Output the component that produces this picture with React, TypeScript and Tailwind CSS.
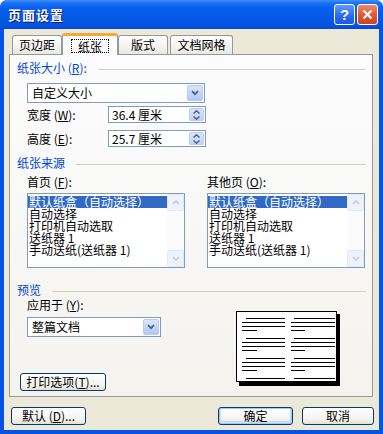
import React from "react";

const paperSources = ["默认纸盒（自动选择）", "自动选择", "打印机自动选取", "送纸器 1", "手动送纸(送纸器 1)"];

function U({ c }: { c: string }) {
  return <span className="underline underline-offset-[1px]">{c}</span>;
}

function Chevron() {
  return (
    <svg width="8" height="6" viewBox="0 0 8 6">
      <path d="M1 1.2 L4 4.2 L7 1.2" fill="none" stroke="#4d6185" strokeWidth="1.8" />
    </svg>
  );
}

function SectionTitle({ title, className = "" }: { title: React.ReactNode; className?: string }) {
  return (
    <div className={`flex items-center h-[14px] ${className}`}>
      <span className="text-[#0046d5] leading-[14px] whitespace-nowrap">{title}</span>
      <div className="flex-1 h-px bg-[#d3d0c2] ml-[11px] mt-[2px]" />
    </div>
  );
}

function Combo({ value, className = "" }: { value: string; className?: string }) {
  return (
    <div className={`flex items-center h-[20px] border border-[#7f9db9] bg-white ${className}`}>
      <span className="flex-1 pl-[4px] leading-[18px] whitespace-nowrap">{value}</span>
      <div className="w-[16px] h-[16px] m-px flex items-center justify-center rounded-[2px] border border-[#b8cbf6] bg-[linear-gradient(to_bottom,#dbe6fd,#c0d2fa_60%,#b4c8f6)]">
        <Chevron />
      </div>
    </div>
  );
}

function Spin({ value }: { value: string }) {
  return (
    <div className="flex h-[17px] w-[98px] border border-[#7f9db9] bg-white">
      <span className="flex-1 pl-[3px] leading-[15px] whitespace-nowrap">{value}</span>
      <div className="w-[15px] m-px flex flex-col items-center justify-center gap-[2px] rounded-[2px] border border-[#b8cbf6] bg-[linear-gradient(to_bottom,#dbe6fd,#c0d2fa)]">
        <svg width="7" height="4" viewBox="0 0 7 4">
          <path d="M0.5 3.5 L3.5 0.8 L6.5 3.5" fill="none" stroke="#4d6185" strokeWidth="1.5" />
        </svg>
        <svg width="7" height="4" viewBox="0 0 7 4">
          <path d="M0.5 0.5 L3.5 3.2 L6.5 0.5" fill="none" stroke="#4d6185" strokeWidth="1.5" />
        </svg>
      </div>
    </div>
  );
}

function ScrollButton({ up }: { up?: boolean }) {
  return (
    <div className="w-[17px] h-[17px] flex items-center justify-center rounded-[2px] border border-[#e3e8f6] bg-[#eef2fc]">
      <svg width="8" height="5" viewBox="0 0 8 5">
        <path d={up ? "M1 4 L4 1 L7 4" : "M1 1 L4 4 L7 1"} fill="none" stroke="#c3cbe0" strokeWidth="1.6" />
      </svg>
    </div>
  );
}

function ListBox() {
  return (
    <div className="flex w-[158px] h-[75px] border border-[#7f9db9] bg-white">
      <div className="flex-1 pt-[2px]">
        {paperSources.map((t, i) => (
          <div
            key={t}
            className={`h-[12px] leading-[12px] pl-[1px] whitespace-nowrap ${i === 0 ? "bg-[#316ac5] text-white" : ""}`}
          >
            {t}
          </div>
        ))}
      </div>
      <div className="w-[17px] flex flex-col justify-between bg-[#fbfbfd]">
        <ScrollButton up />
        <ScrollButton />
      </div>
    </div>
  );
}

function XpButton({ children, className = "", primary }: { children: React.ReactNode; className?: string; primary?: boolean }) {
  return (
    <div
      className={`h-[18px] flex items-center justify-center rounded-[3px] border border-[#003c74] bg-[linear-gradient(to_bottom,#ffffff,#f4f3ee_70%,#e3e0d4)] leading-[16px] whitespace-nowrap ${
        primary ? "shadow-[inset_0_0_0_1px_#a9c6f5,inset_0_-1px_0_2px_#c9dcfa]" : ""
      } ${className}`}
    >
      {children}
    </div>
  );
}

function PagePreview() {
  const groups = [7, 27, 47];
  const lines: React.ReactNode[] = [];
  groups.forEach((y) => {
    lines.push(<rect key={`a${y}`} x="10" y={y} width="39" height="1" />);
    lines.push(<rect key={`b${y}`} x="6" y={y + 4} width="43" height="1" />);
    lines.push(<rect key={`c${y}`} x="6" y={y + 8} width="43" height="1" />);
    lines.push(<rect key={`d${y}`} x="6" y={y + 12} width="15" height="1" />);
    lines.push(<rect key={`e${y}`} x="58" y={y} width="41" height="1" />);
    lines.push(<rect key={`f${y}`} x="55" y={y + 4} width="44" height="1" />);
    lines.push(<rect key={`g${y}`} x="55" y={y + 8} width="44" height="1" />);
    lines.push(<rect key={`h${y}`} x="55" y={y + 12} width="14" height="1" />);
  });
  lines.push(<rect key="z1" x="10" y="67" width="39" height="1" />);
  lines.push(<rect key="z2" x="58" y="67" width="41" height="1" />);
  return (
    <svg width="104" height="75" viewBox="0 0 104 75" className="mt-[14px] shrink-0">
      <rect x="3" y="3" width="101" height="72" fill="#000" />
      <rect x="0.5" y="0.5" width="100" height="70" fill="#fff" stroke="#000" />
      <g fill="#000">{lines}</g>
    </svg>
  );
}

function TitleBar() {
  return (
    <div className="h-[29px] flex items-center justify-between pl-[8px] pr-[5px] rounded-t-[7px] bg-[linear-gradient(to_bottom,#3d8ff9_0px,#1c70f5_3px,#0a60ee_8px,#0558e6_18px,#0553e0_26px,#0448d4_29px)]">
      <span className="text-white font-bold text-[13px] tracking-[1px] [text-shadow:1px_1px_#0a1883]">页面设置</span>
      <div className="flex gap-[2px]">
        <div className="w-[21px] h-[21px] rounded-[3px] border border-white flex items-center justify-center bg-[linear-gradient(to_bottom,#5c9bfb,#2a67ee_60%,#1e58e0)] text-white font-bold text-[15px] leading-none font-['Liberation_Sans',sans-serif]">
          ?
        </div>
        <div className="w-[21px] h-[21px] rounded-[3px] border border-white flex items-center justify-center bg-[linear-gradient(to_bottom,#ee8a6c,#e25a34_50%,#cc4320)]">
          <svg width="11" height="11" viewBox="0 0 11 11">
            <path d="M1.5 1.5 L9.5 9.5 M9.5 1.5 L1.5 9.5" stroke="#fff" strokeWidth="2.2" />
          </svg>
        </div>
      </div>
    </div>
  );
}

function Tab({ label, selected, className = "" }: { label: string; selected?: boolean; className?: string }) {
  if (selected) {
    return (
      <div
        className={`relative z-10 -mb-px h-[22px] flex items-center justify-center border-x border-[#919b9c] border-t-[3px] border-t-[#f5a73a] rounded-t-[3px] bg-[#fcfcfe] ${className}`}
      >
        <span className="px-[6px] h-[14px] leading-[13px] border border-dotted border-black">{label}</span>
      </div>
    );
  }
  return (
    <div
      className={`h-[19px] flex items-center justify-center border border-b-0 border-[#919b9c] rounded-t-[3px] bg-[linear-gradient(to_bottom,#ffffff,#f3f2ee_60%,#e9e7e0)] leading-[18px] ${className}`}
    >
      {label}
    </div>
  );
}

export default function App() {
  return (
    <div className="w-[383px] h-[434px] flex flex-col rounded-t-[8px] bg-[#0553e3] text-[12px] text-black leading-none font-['Noto_Sans_CJK_SC',sans-serif]">
      <TitleBar />
      <div className="flex-1 mx-[4px] mb-[4px] bg-[#ece9d8] flex flex-col">
        {/* tabs */}
        <div className="flex items-end h-[25px] pt-[4px] pl-[8px]">
          <Tab label="页边距" className="w-[50px]" />
          <Tab label="纸张" selected className="w-[56px]" />
          <Tab label="版式" className="w-[50px]" />
          <Tab label="文档网格" className="w-[63px] ml-[2px]" />
        </div>

        {/* tab page */}
        <div className="ml-[5px] w-[364px] h-[343px] border border-[#919b9c] bg-[linear-gradient(to_bottom,#fcfcfe,#f4f3ee)] pl-[7px] pr-[6px] flex flex-col">
          <SectionTitle className="mt-[6px]" title={<>纸张大小 (<U c="R" />):</>} />
          <Combo value="自定义大小" className="mt-[8px] ml-[10px] w-[178px]" />
          <div className="flex items-center mt-[3px] ml-[10px]">
            <span className="w-[81px]">
              宽度 (<U c="W" />):
            </span>
            <Spin value="36.4 厘米" />
          </div>
          <div className="flex items-center mt-[7px] ml-[10px]">
            <span className="w-[81px]">
              高度 (<U c="E" />):
            </span>
            <Spin value="25.7 厘米" />
          </div>

          <SectionTitle className="mt-[9px]" title="纸张来源" />
          <div className="flex gap-[22px] ml-[10px] mt-[5px] h-[14px] leading-[14px]">
            <span className="w-[158px]">
              首页 (<U c="F" />):
            </span>
            <span className="w-[158px]">
              其他页 (<U c="O" />):
            </span>
          </div>
          <div className="flex gap-[22px] ml-[10px] mt-[4px]">
            <ListBox />
            <ListBox />
          </div>

          <SectionTitle className="mt-[15px]" title="预览" />
          <div className="flex">
            <div className="w-[219px] flex flex-col">
              <span className="ml-[10px] mt-[1px] h-[14px] leading-[14px]">
                应用于 (<U c="Y" />):
              </span>
              <Combo value="整篇文档" className="mt-[5px] ml-[10px] w-[134px]" />
              <XpButton className="mt-[36px] ml-[3px] w-[86px]">
                打印选项(<U c="T" />)...
              </XpButton>
            </div>
            <PagePreview />
          </div>
        </div>

        {/* dialog buttons */}
        <div className="flex justify-between mt-[10px] pl-[7px] pr-[5px]">
          <XpButton className="w-[75px]">
            默认 (<U c="D" />)...
          </XpButton>
          <div className="flex gap-[9px]">
            <XpButton primary className="w-[75px]">
              确定
            </XpButton>
            <XpButton className="w-[72px]">取消</XpButton>
          </div>
        </div>
      </div>
    </div>
  );
}
